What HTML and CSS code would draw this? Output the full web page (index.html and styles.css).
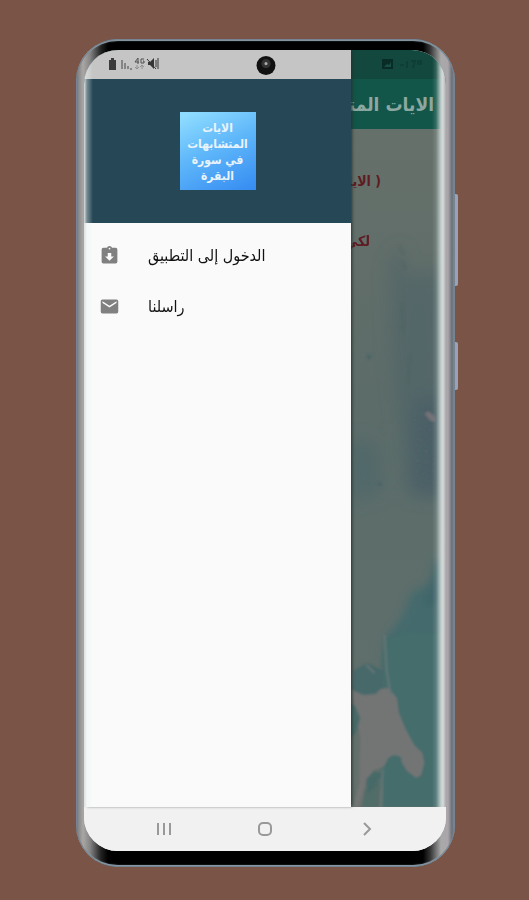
FILE: index.html
```html
<!DOCTYPE html>
<html lang="ar">
<head>
<meta charset="utf-8">
<meta name="viewport" content="width=device-width, initial-scale=1">
<title>الايات المتشابهات</title>
<link rel="stylesheet" href="styles.css">
</head>
<body>
<div class="phone">
  <span class="side-key volume"></span>
  <span class="side-key power"></span>
  <div class="screen">
    <main class="app">
      <div class="app-status">
        <svg width="42" height="12" viewBox="0 0 42 12" aria-hidden="true"><path fill="#0a2c26" d="M0 1h11v10H0z"/><path fill="#174f44" d="M2 9l3-3 2 1 2-3v5z"/><path stroke="#0d3a31" stroke-width="2" opacity=".7" d="M18 7h4M25 3v7M29 3h4l-2 7M36 3h3v3h-3z" fill="none"/></svg>
      </div>
      <h1 class="app-bar" dir="rtl">الايات المتشابهات</h1>
      <div class="page">
        <svg class="paint" viewBox="0 0 96 678" preserveAspectRatio="none" aria-hidden="true">
          <defs>
            <linearGradient id="wash" x2="0" y2="1"><stop offset="0" stop-color="#66706a"/><stop offset=".4" stop-color="#5c6c69"/><stop offset=".7" stop-color="#5d6e6b"/><stop offset="1" stop-color="#65706b"/></linearGradient>
            <filter id="soft" x="-50%" y="-50%" width="200%" height="200%"><feGaussianBlur stdDeviation="9"/></filter>
            <filter id="mid" x="-30%" y="-30%" width="160%" height="160%"><feGaussianBlur stdDeviation="4"/></filter>
            <filter id="edge" x="-20%" y="-20%" width="140%" height="140%"><feGaussianBlur stdDeviation="1"/></filter>
          </defs>
          <path fill="url(#wash)" d="M0 0h96v678H0z"/>
          <g filter="url(#soft)">
            <path fill="#4a6367" opacity=".55" d="M40 135l12-20 8 32 36-8v230l-38-6-8-70-8-80z"/>
            <path fill="#455d67" opacity=".6" d="M64 275l32-10v102H62z"/>
            <path fill="#486569" opacity=".55" d="M0 310l28 4 6 50-34 10z"/>
          </g>
          <g filter="url(#mid)">
            <path fill="#456a6d" d="M104 424l-18 8-6 22-18 10-8 22-18 24-2 24-2 24 60 20 12-20z"/>
            <path fill="#3d646b" opacity=".7" d="M100 428l-14 8-5 22-10 22 26-8z"/>
          </g>
          <g filter="url(#edge)">
            <path fill="#446d6c" d="M96 505l-34-2-26 6-2 24 3 30 8 60-14 18 2 37h63z"/>
            <path fill="#47696a" d="M5 542l14-8 16 8v24l-22 2-9-8z"/>
            <path fill="#737575" d="M2 560l13 6 12-1 5-5 8-1 8 10 2 15 7 17 8 15 8 8 2 10-3 12-5 3-9-7-5-8-1-6-6-2-6 2-5 10-10 3-8 13-6 24H5l6-24 1-46z"/>
            <path stroke="#657676" stroke-width="2" fill="none" d="M36 506l2 36 4 24M34 640l-1 38M18 536l8 8"/>
            <path fill="#466a69" d="M0 574l7 3 5 12-4 14-8 9zM18 650l8-8 7 3-5 11-9 8z"/>
            <path fill="#456965" opacity=".6" d="M17 661l14-8-1 25H14z"/>
            <path fill="#757177" d="M75 285l4-3 6 5 1 6-5-1z"/>
            <g stroke="#46605f" stroke-width="1" opacity=".6" fill="none"><path d="M50 117l5 8M52 132l4 8M53 175l1 28M61 225l-2 30"/></g>
            <path fill="#4a6568" d="M18 227l3-2 2 3-3 3zM30 353l3 1-1 4-3-2z"/>
            <g stroke="#717176" stroke-width="1" stroke-dasharray="2 9" opacity=".5"><path d="M65 290l24 72M71 298l-5 60M80 300l-9 65M88 296l-6 70"/></g>
          </g>
        </svg>
        <p class="verse first" dir="rtl">( الايات المتشابهات )</p>
        <p class="verse" dir="rtl">لكي</p>
      </div>
    </main>
    <aside class="drawer">
      <div class="status">
        <svg width="52" height="14" viewBox="0 0 52 14" aria-hidden="true">
          <path fill="#3c3c3c" d="M1 3h2V1h3v2h2v10H1z"/>
          <path fill="#858585" d="M13 3h2v9h-2zM16 6h2v6h-2zM19 9h2v3h-2zM22 11h2v2h-2z"/>
          <path stroke="#505050" fill="none" d="M30 1l-3 4h4M30 1v6M36 2h-3v4h3V4h-1"/><path stroke="#909090" fill="none" d="M29 8v4M27 10l2 2 2-2M34 12V8M32 10l2-2 2 2"/>
          <path fill="#353535" d="M40 5h2l4-4v11l-4-4h-2z"/><path stroke="#353535" fill="none" d="M39 2l9 10M48 3v7M50 1v11"/>
        </svg>
      </div>
      <header class="brand">
        <div class="logo" dir="rtl">الايات<br>المتشابهات<br>في سورة<br>البقرة</div>
      </header>
      <nav class="menu">
        <a href="#enter"><svg viewBox="0 0 24 24" aria-hidden="true"><path d="M19 3h-4.180C14.400 1.840 13.300 1 12 1s-2.400.84-2.820 2H5a2 2 0 0 0-2 2v14a2 2 0 0 0 2 2h14a2 2 0 0 0 2-2V5a2 2 0 0 0-2-2zm-7 0a1 1 0 1 1 0 2 1 1 0 0 1 0-2zm0 15-5-5h3V9h4v4h3z"/></svg><span dir="rtl">الدخول إلى التطبيق</span></a>
        <a href="#contact"><svg viewBox="0 0 24 24" aria-hidden="true"><path d="M20 4H4a2 2 0 0 0-2 2v12a2 2 0 0 0 2 2h16a2 2 0 0 0 2-2V6a2 2 0 0 0-2-2zm0 4-8 5-8-5V6l8 5 8-5z"/></svg><span dir="rtl">راسلنا</span></a>
      </nav>
    </aside>
    <div class="glare"></div>
    <footer class="keys">
      <button type="button" aria-label="Recents"><svg viewBox="0 0 16 16"><path d="M2 2v12M8 2v12M14 2v12"/></svg></button>
      <button type="button" aria-label="Home"><svg viewBox="0 0 16 16"><rect x="2" y="2" width="12" height="12" rx="4"/></svg></button>
      <button type="button" aria-label="Back"><svg viewBox="0 0 16 16"><path d="M6 2l6 6-6 6"/></svg></button>
    </footer>
  </div>
  <span class="camera"></span>
</div>
</body>
</html>
```
FILE: styles.css
```css
* { box-sizing: border-box; }
body {
  margin: 0;
  min-height: 100vh;
  display: flex;
  padding: 39px 74px 33px 76px;
  background: #7a5547;
  font-family: "DejaVu Sans Condensed", "DejaVu Sans", sans-serif;
}
.phone {
  position: relative;
  flex: 1;
  display: flex;
  padding: 11px 9px 16px 8px;
  border-radius: 42px;
  background: linear-gradient(90deg, #6d6f72 0, #8b8c8d 3px, #aaa6a4 7px, #858585 14px, #222 25px, #000 32px, #000 calc(100% - 32px), #333 calc(100% - 25px), #a9a9a9 calc(100% - 14px), #aaa5aa calc(100% - 7px), #687078 calc(100% - 3px), #8996a0 100%);
  box-shadow: inset 0 0 0 1px #748492, inset 0 3px 1px -1px #93a5ad, inset 0 -3px 1px -1px #93a5b3;
}
.screen {
  position: relative;
  flex: 1;
  min-width: 0;
  display: grid;
  grid-template-columns: 267fr 95fr;
  grid-template-rows: 1fr 44px;
  overflow: hidden;
  border-radius: 34px;
  background: #fafafa;
}
.app {
  grid-area: 1 / 1 / 2 / 3;
  display: flex;
  flex-direction: column;
  min-width: 0;
}
.app-status {
  display: flex;
  justify-content: flex-end;
  padding: 8px 22px 0 0;
  height: 29px;
  background: #12483e;
}
.app-bar {
  margin: 0;
  height: 50px;
  padding-right: 12px;
  background: #125549;
  color: #8da8a1;
  font-size: 19px;
  font-weight: 700;
  line-height: 50px;
  white-space: nowrap;
}
.page {
  position: relative;
  flex: 1;
  padding: 38px 65px 0 0;
  background: #606f6b;
}
.paint {
  position: absolute;
  top: 0;
  right: 0;
  width: 27%;
  height: 100%;
}
.verse {
  position: relative;
  margin: 0 11px 32px 0;
  color: #5f1b22;
  font-size: 14px;
  font-weight: 700;
  line-height: 28px;
  white-space: nowrap;
}
.verse.first { margin-right: 0; }
.drawer {
  position: relative;
  grid-area: 1 / 1;
  display: flex;
  flex-direction: column;
  background: #fafafa;
  box-shadow: 2px 0 3px -1px #26332f;
}
.status {
  height: 29px;
  padding: 6px 24px;
  background: #c5c5c5;
}
.brand {
  display: grid;
  place-items: center;
  height: 144px;
  background: #264755;
}
.logo {
  width: 76px;
  height: 78px;
  padding-top: 8px;
  background: linear-gradient(155deg, #8edcff 5%, #60b8fa 45%, #358bf1 100%);
  color: #e9f3fa;
  font-size: 12px;
  font-weight: 700;
  line-height: 16px;
  text-align: center;
  white-space: nowrap;
}
.menu {
  display: flex;
  flex-direction: column;
  padding-top: 7px;
}
.menu a {
  display: flex;
  align-items: center;
  gap: 28px;
  height: 51px;
  padding-left: 15px;
  color: #111;
  font-size: 16px;
  text-decoration: none;
}
.menu svg { width: 21px; height: 21px; fill: #808080; }
.glare {
  grid-area: 1 / 1 / 2 / 3;
  z-index: 1;
  background: linear-gradient(90deg, #d9dede 0, rgba(235, 240, 240, .4) 3px, rgba(250, 250, 250, 0) 9px, rgba(190, 205, 205, 0) calc(100% - 14px), rgba(190, 205, 205, .2) calc(100% - 10px), #c3cfcd calc(100% - 5px), #d5dada calc(100% - 3px), #aaa7ab 100%);
}
.keys {
  grid-area: 2 / 1 / 3 / 3;
  display: flex;
  justify-content: center;
  align-items: center;
  gap: 77px;
  background: #f1f1f1;
}
.keys button {
  width: 24px;
  height: 24px;
  padding: 4px;
  border: 0;
  background: none;
}
.keys svg { display: block; width: 16px; height: 16px; fill: none; stroke: #999; stroke-width: 2; }
.camera {
  position: absolute;
  top: 17px;
  left: 50%;
  width: 19px;
  height: 19px;
  transform: translateX(-50%);
  border-radius: 50%;
  background: radial-gradient(circle at 50% 40%, #aaa 0 1px, #333 2px 4px, #111 5px);
}
.side-key {
  position: absolute;
  left: 100%;
  width: 3px;
  border-radius: 0 2px 2px 0;
  background: #9aa2b8;
}
.volume { top: 155px; height: 92px; }
.power { top: 303px; height: 48px; }
```
